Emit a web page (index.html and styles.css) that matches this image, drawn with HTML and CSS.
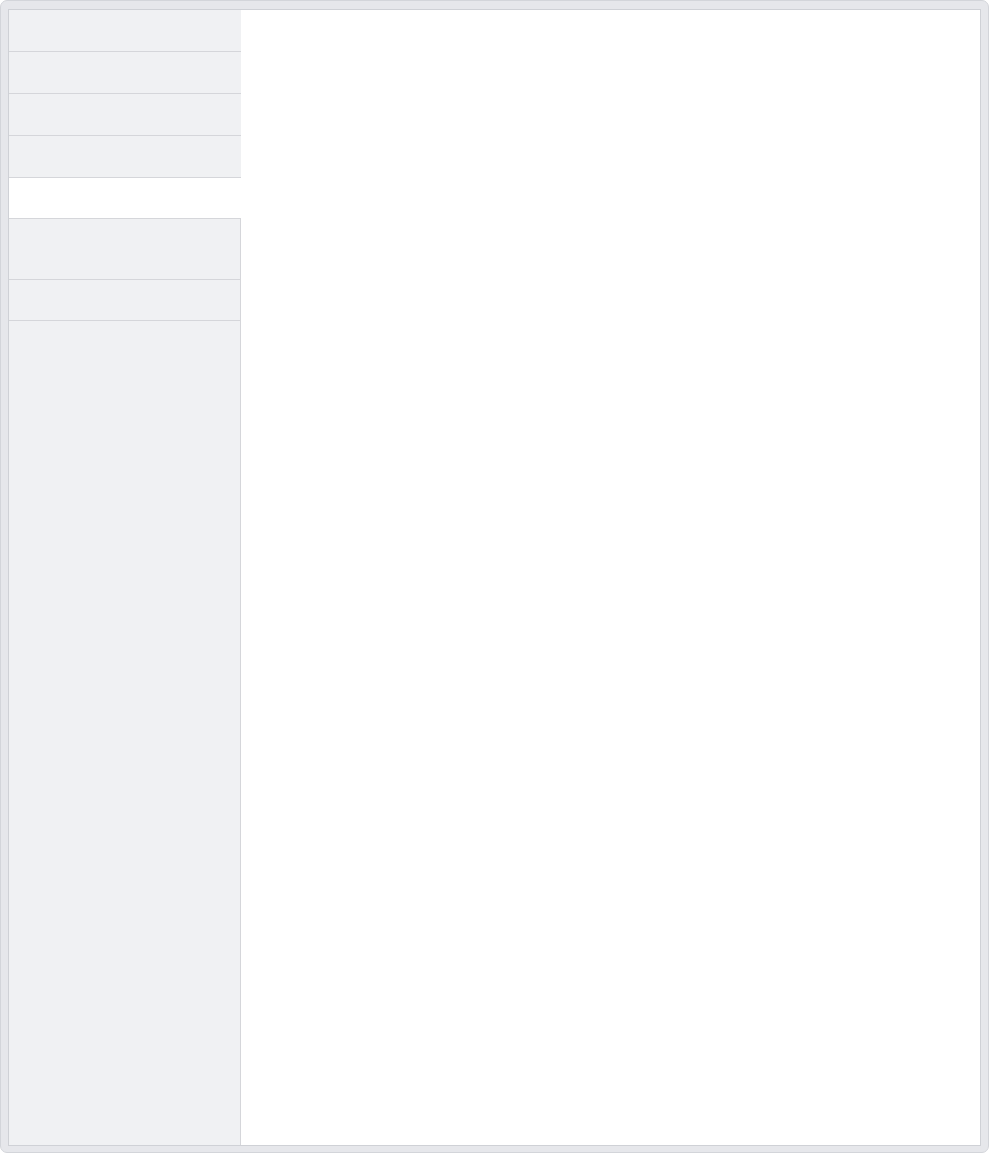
FILE: index.html
```html
<!DOCTYPE html>
<html lang="en">
<head>
    <meta charset="UTF-8">
    <meta name="viewport" content="width=device-width, initial-scale=1.0">
    <title>Tabs</title>
    <link rel="stylesheet" href="styles.css">
</head>
<body>
    <div class="frame">
        <div class="panel">
            <div class="tab-list">
                <div class="tab"></div>
                <div class="tab"></div>
                <div class="tab"></div>
                <div class="tab"></div>
                <div class="tab active"></div>
                <div class="tab after tall"></div>
                <div class="tab after short"></div>
                <div class="tab-fill"></div>
            </div>
            <div class="tab-content"></div>
        </div>
    </div>
</body>
</html>
```

FILE: styles.css
```css
/* Base styles */
html, body {
    margin: 0;
    padding: 0;
    height: 100%;
    background: #fff;
    font-family: 'Liberation Sans', Arial, sans-serif;
}

.frame {
    box-sizing: border-box;
    height: 1153px;
    padding: 8px 7px 6px 7px;
    background: #e6e7eb;
    border: 1px solid #d3d5da;
    border-radius: 7px;
}

.panel {
    box-sizing: border-box;
    height: 100%;
    display: flex;
    background: #fff;
    border: 1px solid #cfd1d6;
}

.tab-list {
    width: 232px;
    display: flex;
    flex-direction: column;
}

.tab {
    height: 41px;
    background: #f0f1f3;
    border-bottom: 1px solid #d5d6da;
}

.tab.active {
    height: 40px;
    background: #fff;
}

.tab.after {
    border-right: 1px solid #d5d6da;
}

.tab.tall {
    height: 60px;
}

.tab.short {
    height: 40px;
}

.tab-fill {
    flex: 1;
    background: #f0f1f3;
    border-right: 1px solid #d5d6da;
}

.tab-content {
    flex: 1;
    background: #fff;
}
```
